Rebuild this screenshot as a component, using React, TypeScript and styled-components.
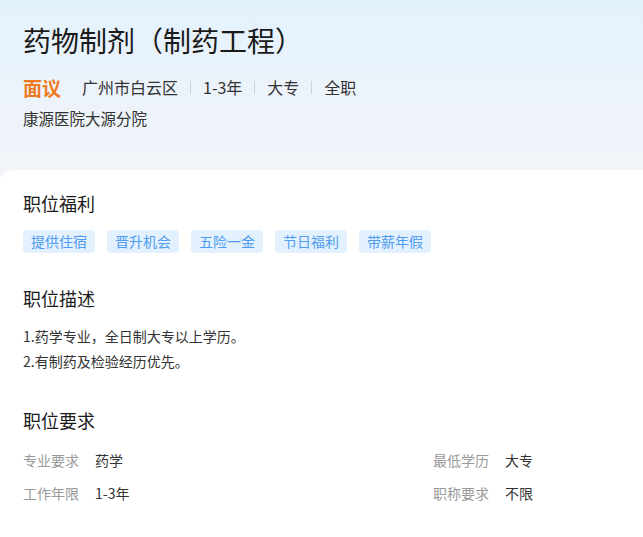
import React from "react";
import styled, { createGlobalStyle } from "styled-components";

const GlobalStyle = createGlobalStyle`
  html, body {
    margin: 0;
    padding: 0;
    background: #ffffff;
  }
  body {
    font-family: "Noto Sans CJK SC", "Noto Sans", sans-serif;
    color: #222;
  }
  * {
    box-sizing: border-box;
  }
`;

const Page = styled.div`
  width: 643px;
  min-height: 537px;
  background: linear-gradient(180deg, #e2f2fd 0px, #eef3fa 110px, #f4f5f9 200px);
`;

const Header = styled.header`
  height: 170px;
  padding: 20px 23px 0;
`;

const Title = styled.h1`
  margin: 0;
  font-size: 28px;
  line-height: 40px;
  font-weight: 400;
  color: #1a1a1a;
`;

const Meta = styled.div`
  display: flex;
  align-items: center;
  margin-top: 14px;
  height: 26px;
  font-size: 16px;
  color: #333;
`;

const Salary = styled.span`
  font-size: 19px;
  font-weight: 700;
  color: #f07a20;
  margin-right: 21px;
`;

const Divider = styled.span`
  display: inline-block;
  width: 1px;
  height: 13px;
  background: #cfd3d8;
  margin: 0 12px;
`;

const Company = styled.div`
  margin-top: 7px;
  font-size: 15.5px;
  line-height: 22px;
  color: #333;
`;

const Card = styled.main`
  background: #ffffff;
  border-top-left-radius: 12px;
  padding: 20px 23px 30px;
  min-height: 367px;
`;

const Section = styled.section<{ $gap?: number }>`
  margin-top: ${(p) => p.$gap ?? 0}px;
`;

const SectionTitle = styled.h2`
  margin: 0;
  font-size: 18px;
  line-height: 26px;
  font-weight: 400;
  color: #1a1a1a;
`;

const Tags = styled.div`
  display: flex;
  gap: 12px;
  margin-top: 14px;
`;

const Tag = styled.span`
  height: 23px;
  line-height: 23px;
  padding: 0 8px;
  border-radius: 4px;
  background: #e3f1fe;
  color: #4f9cf1;
  font-size: 14px;
`;

const Desc = styled.div`
  margin-top: 13px;
  font-size: 14px;
  line-height: 25px;
  color: #333;
`;

const ReqGrid = styled.div`
  display: grid;
  grid-template-columns: 410px 1fr;
  margin-top: 10px;
`;

const ReqItem = styled.div`
  display: flex;
  align-items: center;
  height: 33px;
  font-size: 14px;
`;

const ReqLabel = styled.span`
  color: #999;
  width: 72px;
`;

const ReqValue = styled.span`
  color: #333;
`;

const welfare = ["提供住宿", "晋升机会", "五险一金", "节日福利", "带薪年假"];
const meta = ["广州市白云区", "1-3年", "大专", "全职"];
const reqs = [
  ["专业要求", "药学"],
  ["最低学历", "大专"],
  ["工作年限", "1-3年"],
  ["职称要求", "不限"],
];

export default function App() {
  return (
    <>
      <GlobalStyle />
      <Page>
        <Header>
          <Title>药物制剂（制药工程）</Title>
          <Meta>
            <Salary>面议</Salary>
            {meta.map((m, i) => (
              <React.Fragment key={m}>
                {i > 0 && <Divider />}
                <span>{m}</span>
              </React.Fragment>
            ))}
          </Meta>
          <Company>康源医院大源分院</Company>
        </Header>
        <Card>
          <Section>
            <SectionTitle>职位福利</SectionTitle>
            <Tags>
              {welfare.map((w) => (
                <Tag key={w}>{w}</Tag>
              ))}
            </Tags>
          </Section>
          <Section $gap={32}>
            <SectionTitle>职位描述</SectionTitle>
            <Desc>
              1.药学专业，全日制大专以上学历。
              <br />
              2.有制药及检验经历优先。
            </Desc>
          </Section>
          <Section $gap={33}>
            <SectionTitle>职位要求</SectionTitle>
            <ReqGrid>
              {reqs.map(([label, value]) => (
                <ReqItem key={label}>
                  <ReqLabel>{label}</ReqLabel>
                  <ReqValue>{value}</ReqValue>
                </ReqItem>
              ))}
            </ReqGrid>
          </Section>
        </Card>
      </Page>
    </>
  );
}
